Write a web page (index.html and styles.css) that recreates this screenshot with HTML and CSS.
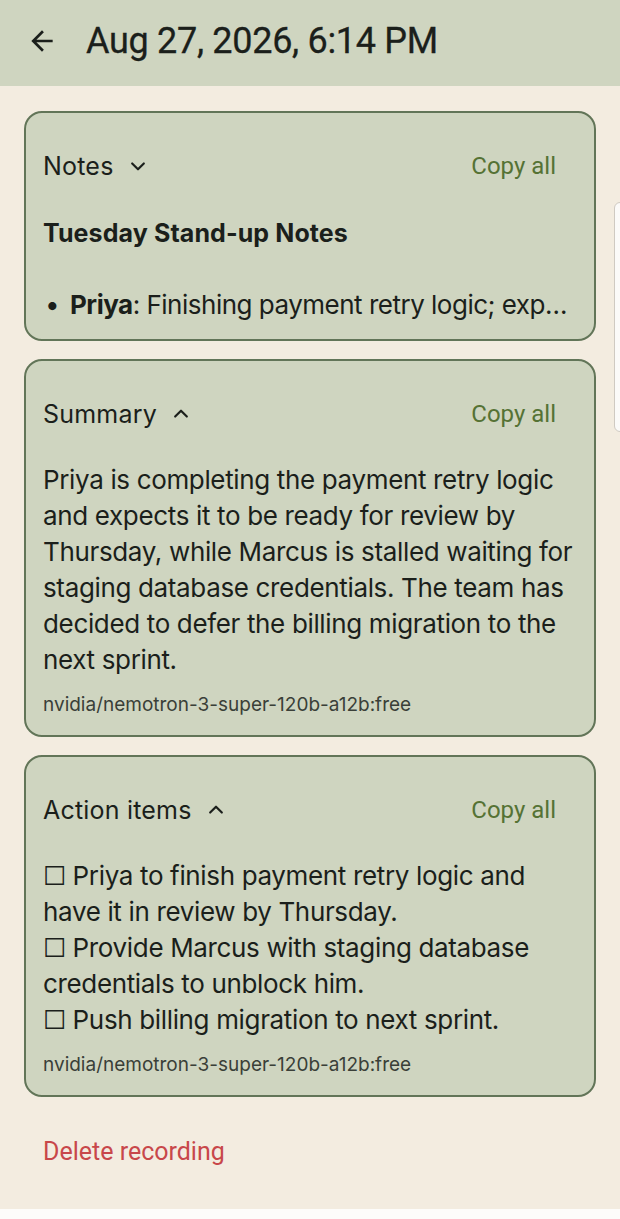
FILE: index.html
```html
<!DOCTYPE html>
<html lang="en">
<head>
<meta charset="utf-8">
<title>Recording</title>
<link rel="stylesheet" href="styles.css">
</head>
<body>
<header class="topbar">
  <button class="back" aria-label="Back">
    <svg width="32" height="32" viewBox="0 0 24 24"><path d="M20 11H7.83l5.59-5.59L12 4l-8 8 8 8 1.41-1.41L7.83 13H20v-2z" fill="#1b1f1b"/></svg>
  </button>
  <h1 class="title">Aug 27, 2026, 6:14 PM</h1>
</header>

<main class="content">
  <section class="card">
    <div class="card-head">
      <div class="card-label">Notes
        <svg class="chev" width="20" height="20" viewBox="0 0 24 24"><path d="M5 9l7 7 7-7" fill="none" stroke="#1b1f1b" stroke-width="2.6" stroke-linecap="round" stroke-linejoin="round"/></svg>
      </div>
      <button class="copy">Copy all</button>
    </div>
    <h2 class="notes-title">Tuesday Stand-up Notes</h2>
    <p class="bullet"><span class="dot">•</span><b>Priya</b>: Finishing payment retry logic; expects it to be ready for review by Thursday.</p>
  </section>

  <section class="card">
    <div class="card-head">
      <div class="card-label">Summary
        <svg class="chev" width="20" height="20" viewBox="0 0 24 24"><path d="M5 15l7-7 7 7" fill="none" stroke="#1b1f1b" stroke-width="2.6" stroke-linecap="round" stroke-linejoin="round"/></svg>
      </div>
      <button class="copy">Copy all</button>
    </div>
    <p class="body-text">Priya is completing the payment retry logic and expects it to be ready for review by Thursday, while Marcus is stalled waiting for staging database credentials. The team has decided to defer the billing migration to the next sprint.</p>
    <p class="model">nvidia/nemotron-3-super-120b-a12b:free</p>
  </section>

  <section class="card">
    <div class="card-head">
      <div class="card-label">Action items
        <svg class="chev" width="20" height="20" viewBox="0 0 24 24"><path d="M5 15l7-7 7 7" fill="none" stroke="#1b1f1b" stroke-width="2.6" stroke-linecap="round" stroke-linejoin="round"/></svg>
      </div>
      <button class="copy">Copy all</button>
    </div>
    <p class="body-text">☐ Priya to finish payment retry logic and have it in review by Thursday.<br>☐ Provide Marcus with staging database credentials to unblock him.<br>☐ Push billing migration to next sprint.</p>
    <p class="model">nvidia/nemotron-3-super-120b-a12b:free</p>
  </section>

  <button class="delete">Delete recording</button>
</main>

<div class="edge-panel"></div>
<div class="bottom-strip"></div>
</body>
</html>
```

FILE: styles.css
```css
* { box-sizing: border-box; }
html, body { margin: 0; padding: 0; }
body {
  background: #f3ece0;
  color: #1b1f1b;
  font-family: Inter, "Noto Sans", sans-serif;
  width: 620px;
  height: 1219px;
  overflow: hidden;
  position: relative;
}
button { font: inherit; color: inherit; background: none; border: 0; padding: 0; cursor: pointer; }

.topbar {
  height: 86px;
  background: #cfd5c0;
  display: flex;
  align-items: center;
  padding-left: 26px;
  gap: 28px;
  padding-bottom: 4px;
}
.back { display: flex; width: 32px; height: 32px; }
.title {
  margin: 0;
  font-family: Roboto, sans-serif;
  font-weight: 400;
  font-size: 36px;
  letter-spacing: -0.3px;
  color: #1b1f1b;
  -webkit-text-stroke: 0.3px #1b1f1b;
}

.content {
  padding: 25px 24px 0 24px;
  display: flex;
  flex-direction: column;
  gap: 18px;
}
.card {
  background: #cfd5c0;
  border: 2px solid #627558;
  border-radius: 18px;
  padding: 23px 17px 0 17px;
}
.card-head {
  height: 60px;
  display: flex;
  align-items: center;
  justify-content: space-between;
}
.card-label {
  display: flex;
  align-items: center;
  gap: 14px;
  font-size: 25px;
  letter-spacing: 0.2px;
}
.chev { display: block; }
.copy {
  font-family: Roboto, sans-serif;
  font-size: 24px;
  color: #557234;
  margin-right: 21px;
}
.notes-title {
  margin: 22px 0 0;
  font-size: 25px;
  font-weight: 700;
  line-height: 30px;
  letter-spacing: 0.1px;
}
.bullet {
  margin: 42px 0 0;
  font-size: 26px;
  line-height: 30px;
  letter-spacing: -0.5px;
  white-space: nowrap;
  overflow: hidden;
  text-overflow: ellipsis;
  padding-bottom: 19px;
}
.dot { display: inline-block; width: 27px; padding-left: 2px; }
.bullet b { font-weight: 700; }
.body-text {
  margin: 18px 0 0;
  font-size: 26px;
  line-height: 36px;
  letter-spacing: -0.35px;
}
.model {
  margin: 15px 0 0;
  font-size: 19px;
  line-height: 24px;
  color: #3a3f38;
  letter-spacing: 0;
  padding-bottom: 18px;
}
.delete {
  align-self: flex-start;
  margin: 22px 0 0 19px;
  font-family: Roboto, sans-serif;
  font-size: 25px;
  color: #c8474a;
}
.edge-panel {
  position: absolute;
  left: 614px;
  top: 202px;
  width: 12px;
  height: 230px;
  background: #fbfaf8;
  border: 1.5px solid #cfcac2;
  border-radius: 8px;
}
.bottom-strip {
  position: absolute;
  left: 0;
  bottom: 0;
  width: 100%;
  height: 10px;
  background: #fdfcfa;
}
```
